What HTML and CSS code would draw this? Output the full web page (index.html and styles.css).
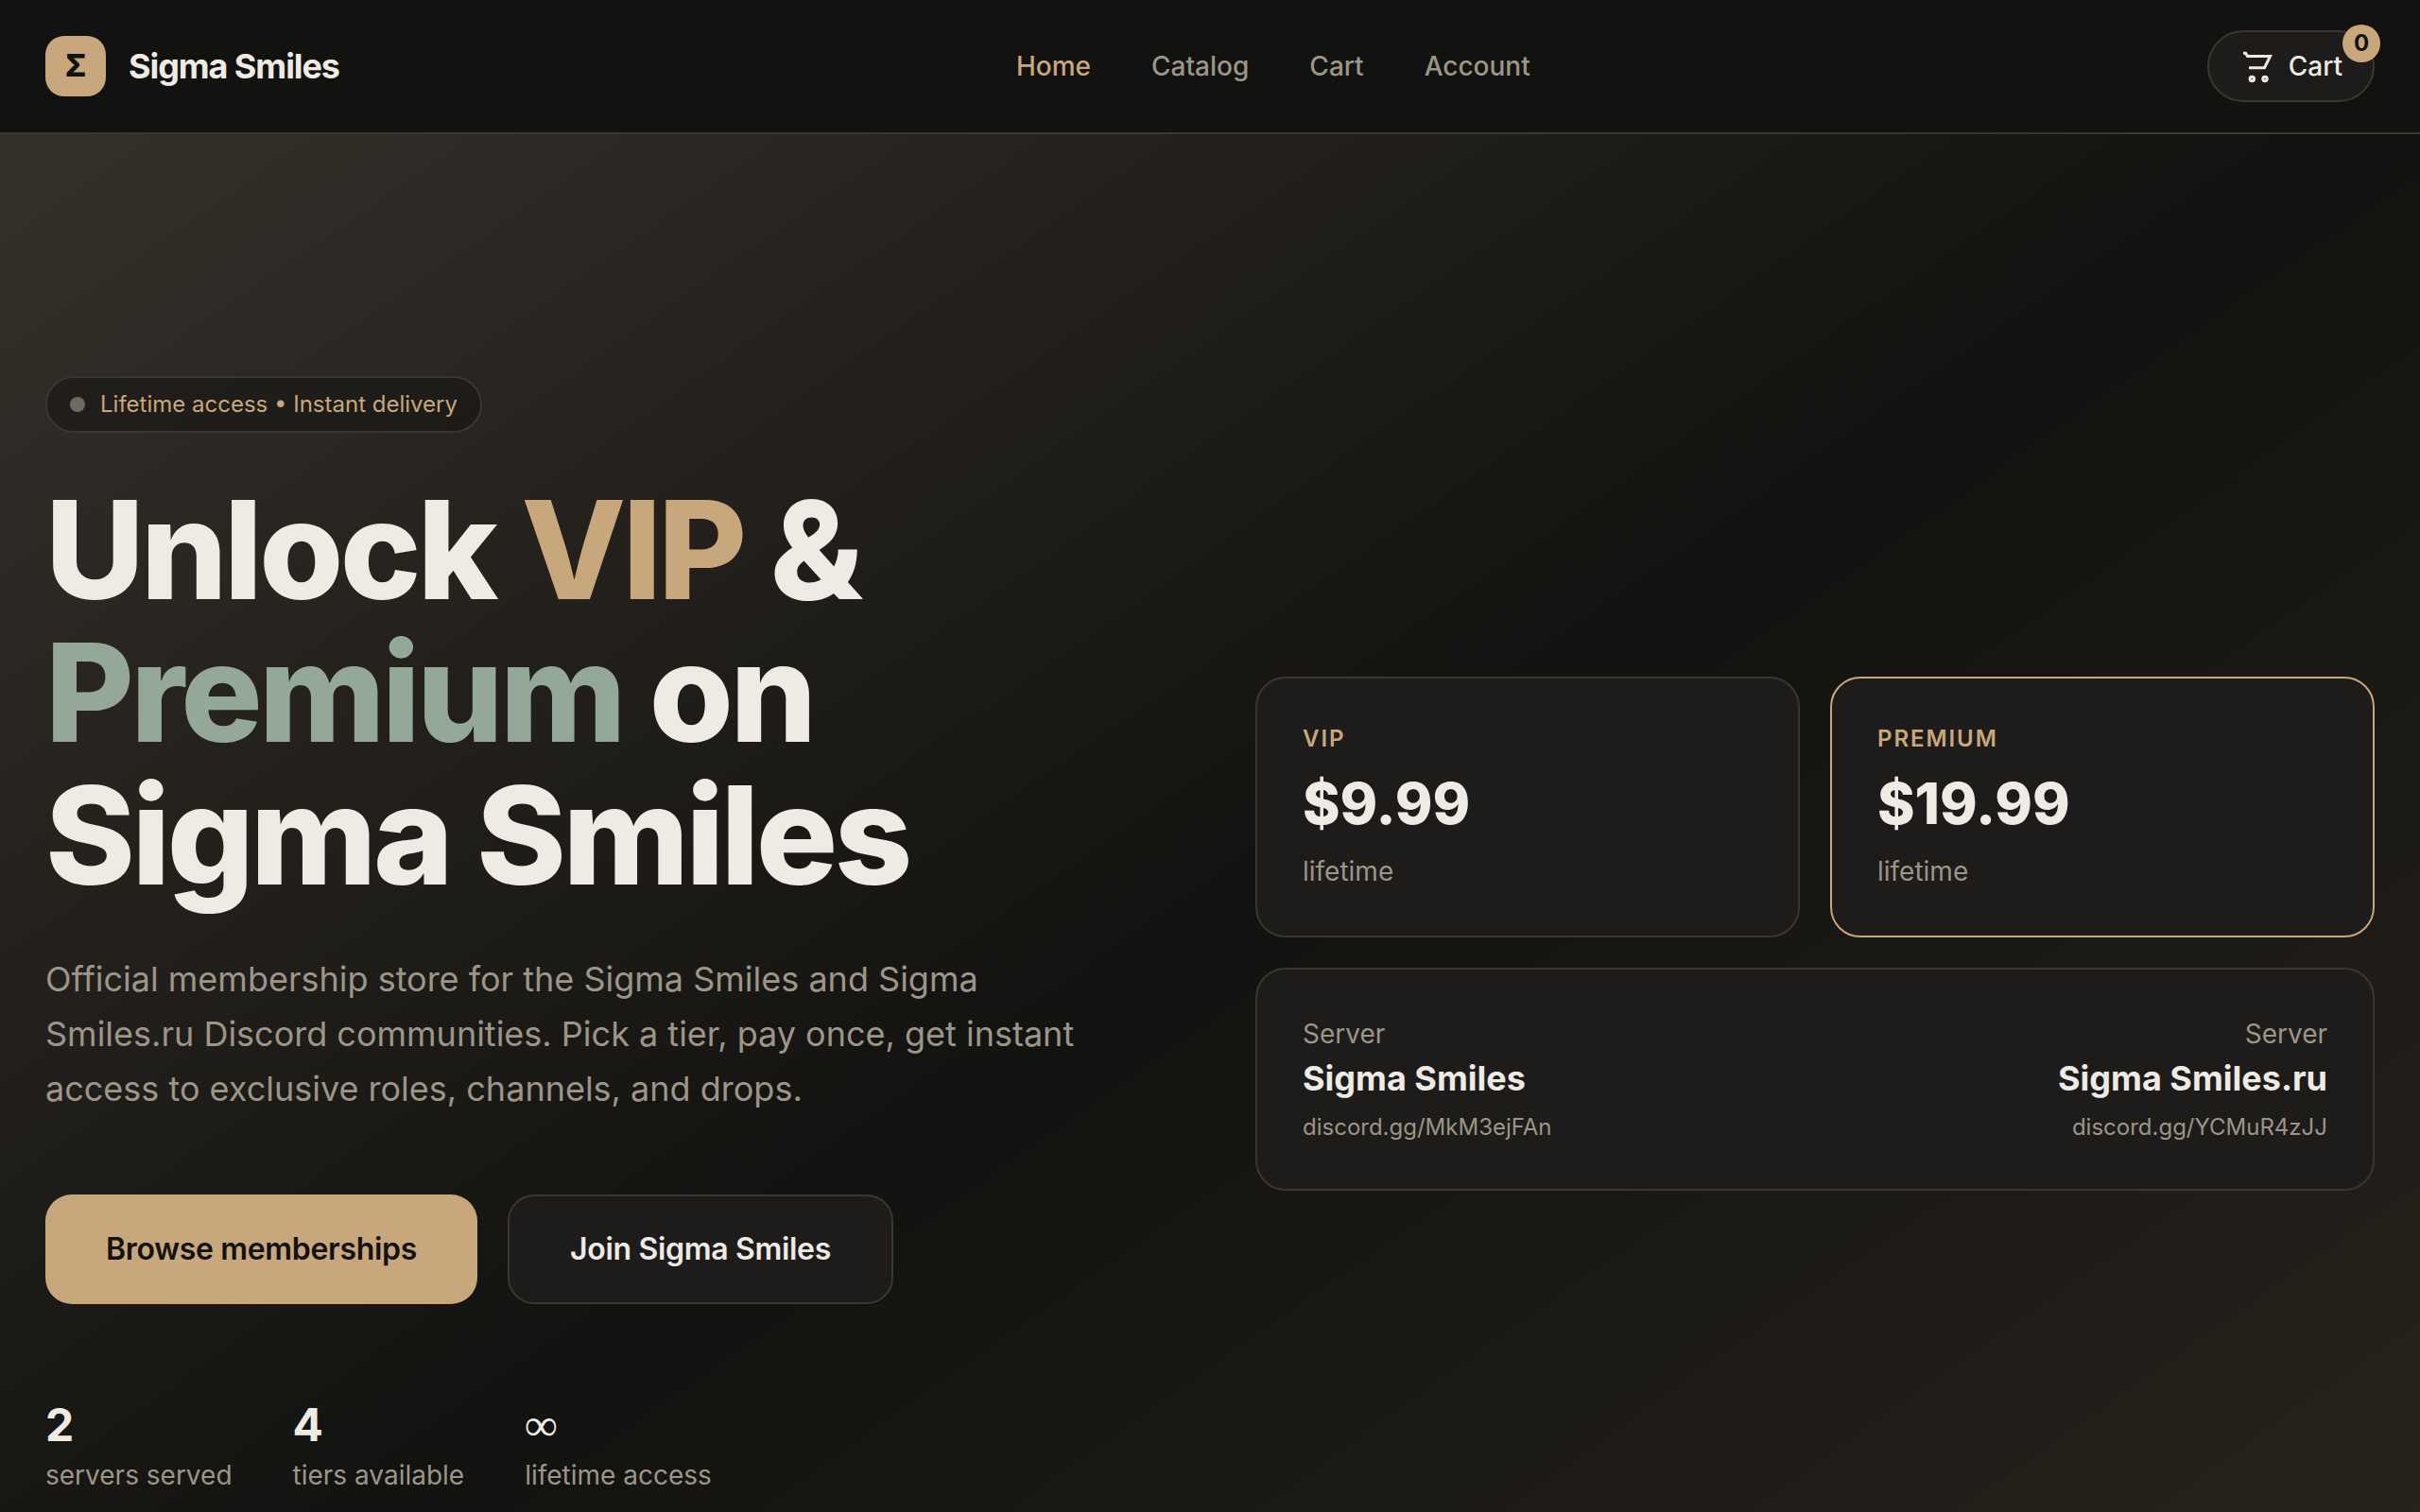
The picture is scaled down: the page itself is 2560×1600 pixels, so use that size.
FILE: index.html
```html
<!DOCTYPE html>
<html lang="en">
<head>
  <meta charset="UTF-8" />
  <meta name="viewport" content="width=device-width, initial-scale=1.0" />
  <title>Sigma Smiles</title>
  <link rel="stylesheet" href="styles.css">
</head>
<body>
  <header class="header">
    <a class="brand" href="#">
      <span class="brand-mark">Σ</span>
      <span class="brand-name">Sigma Smiles</span>
    </a>
    <nav class="nav">
      <a class="nav-link active" href="#">Home</a>
      <a class="nav-link" href="#catalog">Catalog</a>
      <a class="nav-link" href="#cart">Cart</a>
      <a class="nav-link" href="#account">Account</a>
    </nav>
    <button class="cart-btn" type="button">
      <svg class="cart-icon" viewBox="0 0 36 36" fill="none" stroke="currentColor" stroke-width="3">
        <path d="M4 4.2h2.5L8.500 7.500H32.500L26.500 19.700H10" />
        <circle cx="13.3" cy="31.500" r="2.2" />
        <circle cx="27" cy="31.500" r="2.2" />
      </svg>
      <span>Cart</span>
      <span class="cart-count">0</span>
    </button>
  </header>

  <main class="hero">
    <section class="hero-copy">
      <div class="pill"><span class="pill-dot"></span>Lifetime access • Instant delivery</div>
      <h1 class="hero-title">Unlock <span class="gold">VIP</span> &amp;<br><span class="sage">Premium</span> on<br>Sigma Smiles</h1>
      <p class="hero-text">Official membership store for the Sigma Smiles and Sigma Smiles.ru Discord communities. Pick a tier, pay once, get instant access to exclusive roles, channels, and drops.</p>
      <div class="actions">
        <a class="btn btn-primary" href="#catalog">Browse memberships</a>
        <a class="btn btn-ghost" href="#join">Join Sigma Smiles</a>
      </div>
      <div class="stats">
        <div class="stat"><strong>2</strong><span>servers served</span></div>
        <div class="stat"><strong>4</strong><span>tiers available</span></div>
        <div class="stat"><strong class="symbol">∞</strong><span>lifetime access</span></div>
      </div>
    </section>

    <section class="hero-cards">
      <article class="card">
        <div class="tier">VIP</div>
        <div class="price">$9.99</div>
        <div class="muted">lifetime</div>
      </article>
      <article class="card featured">
        <div class="tier">PREMIUM</div>
        <div class="price">$19.99</div>
        <div class="muted">lifetime</div>
      </article>
      <article class="card servers">
        <div class="server">
          <div class="muted">Server</div>
          <div class="server-name">Sigma Smiles</div>
          <div class="invite">discord.gg/MkM3ejFAn</div>
        </div>
        <div class="server right">
          <div class="muted">Server</div>
          <div class="server-name">Sigma Smiles.ru</div>
          <div class="invite">discord.gg/YCMuR4zJJ</div>
        </div>
      </article>
    </section>
  </main>
</body>
</html>
```
FILE: styles.css
```css
:root {
  --bg: #121210;
  --card: #1d1c1a;
  --line: #3a3732;
  --text: #eeeae4;
  --muted: #9c9588;
  --gold: #c8a77c;
  --sage: #94a89a;
}

* {
  box-sizing: border-box;
}

body {
  margin: 0;
  height: 100vh;
  overflow: hidden;
  background: var(--bg);
  color: var(--text);
  font-family: Inter, "Liberation Sans", sans-serif;
  font-size: 28px;
  line-height: 40px;
}

a {
  color: inherit;
  text-decoration: none;
}

.header {
  display: flex;
  align-items: center;
  justify-content: space-between;
  padding: 32px 48px;
  background: var(--bg);
  border-bottom: 2px solid var(--line);
}

.brand {
  display: flex;
  align-items: center;
  gap: 24px;
}

.brand-mark {
  display: grid;
  place-items: center;
  width: 64px;
  height: 64px;
  border-radius: 20px;
  background: var(--gold);
  color: var(--bg);
  font-size: 32px;
  font-weight: 800;
}

.brand-name {
  font-size: 36px;
  font-weight: 700;
  letter-spacing: -0.03em;
}

.nav {
  display: flex;
  gap: 64px;
}

.nav-link {
  color: var(--muted);
  font-weight: 500;
}

.nav-link.active {
  color: var(--gold);
}

.cart-btn {
  position: relative;
  display: flex;
  align-items: center;
  gap: 16px;
  height: 76px;
  padding: 0 32px;
  border: 2px solid var(--line);
  border-radius: 38px;
  background: var(--card);
  color: var(--text);
  font: inherit;
  font-weight: 500;
  cursor: pointer;
}

.cart-icon {
  width: 36px;
  height: 36px;
}

.cart-count {
  position: absolute;
  top: -8px;
  right: -8px;
  width: 40px;
  height: 40px;
  border-radius: 50%;
  background: var(--gold);
  color: var(--bg);
  font-size: 24px;
  font-weight: 700;
  text-align: center;
}

.hero {
  display: grid;
  grid-template-columns: 1fr 1fr;
  align-items: center;
  gap: 96px;
  padding: 256px 48px;
  background: linear-gradient(145deg, #36302a 0%, #121210 50%, #2a251e 100%);
}

.pill {
  display: inline-flex;
  align-items: center;
  gap: 16px;
  height: 60px;
  padding: 0 24px;
  border: 2px solid var(--line);
  border-radius: 30px;
  background: rgba(18, 18, 16, 0.5);
  color: var(--gold);
  font-size: 24px;
}

.pill-dot {
  width: 16px;
  height: 16px;
  border-radius: 50%;
  background: #6f6a5f;
}

.hero-title {
  margin: 48px 0;
  font-size: 144px;
  line-height: 151px;
  font-weight: 800;
  letter-spacing: -0.025em;
}

.gold {
  color: var(--gold);
}

.sage {
  color: var(--sage);
}

.hero-text {
  max-width: 1120px;
  margin: 0 0 83px;
  color: var(--muted);
  font-size: 36px;
  line-height: 58px;
}

.actions {
  display: flex;
  gap: 32px;
}

.btn {
  height: 116px;
  padding: 0 64px;
  border-radius: 28px;
  font-size: 32px;
  line-height: 116px;
  font-weight: 600;
  letter-spacing: -0.01em;
}

.btn-primary {
  background: var(--gold);
  color: var(--bg);
}

.btn-ghost {
  border: 2px solid var(--line);
  background: var(--card);
  line-height: 112px;
}

.stats {
  display: flex;
  gap: 64px;
  margin-top: 96px;
}

.stat {
  display: flex;
  flex-direction: column;
  gap: 4px;
  color: var(--muted);
  line-height: 34px;
}

.stat strong {
  color: var(--text);
  font-size: 48px;
  line-height: 64px;
  font-weight: 700;
}

.stat .symbol {
  font-family: "Liberation Serif", serif;
}

.hero-cards {
  display: grid;
  grid-template-columns: 1fr 1fr;
  gap: 32px;
}

.card {
  padding: 48px;
  border: 2px solid var(--line);
  border-radius: 32px;
  background: var(--card);
}

.card.featured {
  border-color: var(--gold);
}

.tier {
  color: var(--gold);
  font-size: 24px;
  line-height: 32px;
  font-weight: 600;
  letter-spacing: 0.08em;
}

.price {
  margin: 8px 0;
  font-size: 60px;
  line-height: 88px;
  font-weight: 800;
}

.muted {
  color: var(--muted);
}

.servers {
  grid-column: 1 / -1;
  display: flex;
  justify-content: space-between;
}

.server-name {
  font-size: 36px;
  line-height: 54px;
  font-weight: 700;
}

.invite {
  margin-top: 8px;
  color: var(--muted);
  font-size: 24px;
  line-height: 34px;
}

.right {
  text-align: right;
}
```
